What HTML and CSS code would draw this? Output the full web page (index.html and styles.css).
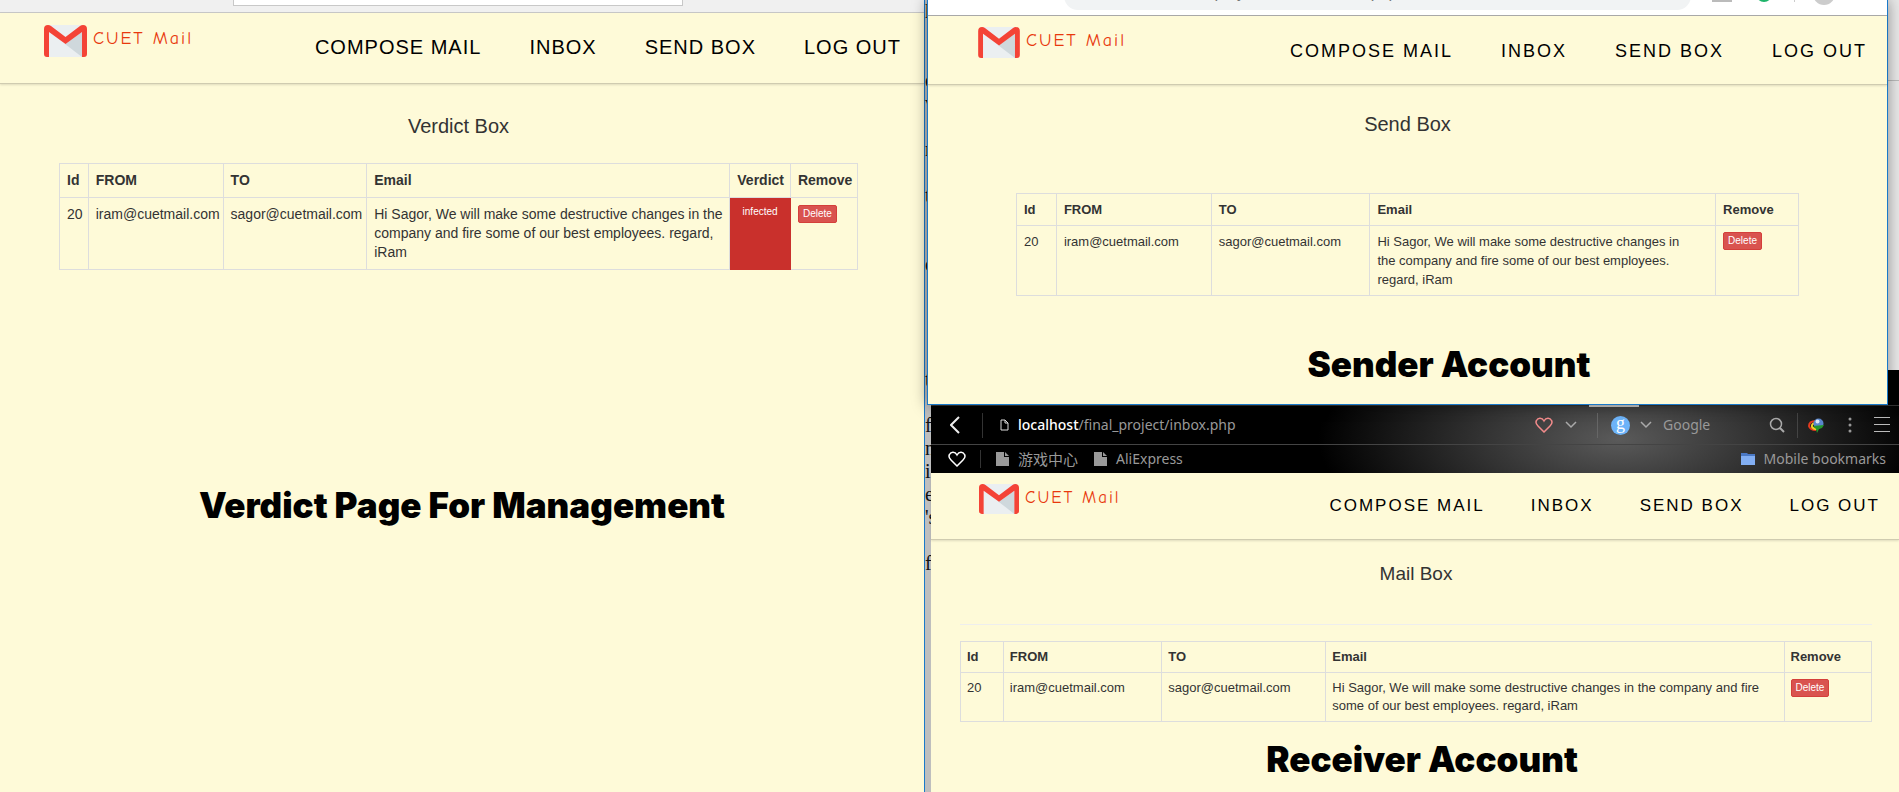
FILE: index.html
```html
<!DOCTYPE html>
<html lang="en">
<head>
<meta charset="utf-8">
<title>CUET Mail</title>
<link rel="stylesheet" href="styles.css">
</head>
<body>
<svg class="defs" width="0" height="0" aria-hidden="true">
  <symbol id="logo" viewBox="0 0 43 32">
    <path d="M4 0H39V32H4Z" fill="#ebeff1"/>
    <path d="M21 19L38 7V32Z" fill="#cfd8dc"/>
    <path d="M5 32H3Q0 32 0 29V4Q0 0 4 0Q5.600 0 7 1L21.500 12L36 1Q37.400 0 39 0Q43 0 43 4V29Q43 32 40 32H38V7L21.500 19L5 7Z" fill="#f44336"/>
  </symbol>
  <symbol id="file" viewBox="0 0 13 14"><path d="M0 0H8V5H13V14H0Z M9 0L13 4H9Z" fill="#999"/></symbol>
</svg>
<main class="desktop">
  <section class="window verdict">
    <div class="plain-bar"><input class="plain-input" type="text" aria-label="Address"></div>
    <header class="header">
      <a class="brand" href="#"><svg class="logo"><use href="#logo"/></svg><span class="brand-name">CUET Mail</span></a>
      <nav class="menu"><a href="#">COMPOSE MAIL</a><a href="#">INBOX</a><a href="#">SEND BOX</a><a href="#">LOG OUT</a></nav>
    </header>
    <div class="content">
      <h2 class="title">Verdict Box</h2>
      <table class="mails">
        <colgroup><col class="v-id"><col class="v-from"><col class="v-to"><col class="v-email"><col class="v-verdict"><col></colgroup>
        <thead><tr><th>Id</th><th>FROM</th><th>TO</th><th>Email</th><th>Verdict</th><th>Remove</th></tr></thead>
        <tbody><tr><td>20</td><td>iram@cuetmail.com</td><td>sagor@cuetmail.com</td><td>Hi Sagor, We will make some destructive changes in the company and fire some of our best employees. regard, iRam</td><td class="infected">infected</td><td><button class="delete" type="button">Delete</button></td></tr></tbody>
      </table>
    </div>
    <h1 class="caption">Verdict Page For Management</h1>
  </section>

  <div class="right">
    <pre class="behind" aria-hidden="true">
h


e
v

n

t


e




t

f
n
i
e
's

fo</pre>
    <section class="window sender">
      <div class="tab-bar">
        <div class="omnibox"><span>localhost/final_project/send_all_mail.php</span></div>
        <i class="ext"></i><i class="ext green"></i><i class="split"></i><i class="avatar"></i>
      </div>
      <header class="header">
        <a class="brand" href="#"><svg class="logo"><use href="#logo"/></svg><span class="brand-name">CUET Mail</span></a>
        <nav class="menu"><a href="#">COMPOSE MAIL</a><a href="#">INBOX</a><a href="#">SEND BOX</a><a href="#">LOG OUT</a></nav>
      </header>
      <div class="content">
        <h2 class="title">Send Box</h2>
        <table class="mails">
          <colgroup><col class="s-id"><col class="s-from"><col class="s-to"><col class="s-email"><col></colgroup>
          <thead><tr><th>Id</th><th>FROM</th><th>TO</th><th>Email</th><th>Remove</th></tr></thead>
          <tbody><tr><td>20</td><td>iram@cuetmail.com</td><td>sagor@cuetmail.com</td><td class="text">Hi Sagor, We will make some destructive changes in the company and fire some of our best employees. regard, iRam</td><td><button class="delete" type="button">Delete</button></td></tr></tbody>
        </table>
      </div>
      <h1 class="caption">Sender Account</h1>
    </section>

    <section class="window receiver">
      <div class="dark">
        <i class="tab-mark"></i>
        <div class="address-row">
          <button class="icon back" type="button" aria-label="Back"><svg width="10" height="18" viewBox="0 0 10 18"><path d="M9 1L1 9L9 17" fill="none" stroke="#eee" stroke-width="2"/></svg></button>
          <i class="rule"></i>
          <svg class="page" width="9" height="12" viewBox="0 0 9 12"><path d="M1 1H5L8 4V11H1ZM5 1V4H8" fill="none" stroke="#ddd"/></svg>
          <span class="url"><b>localhost</b>/final_project/inbox.php</span>
          <svg class="heart" width="18" height="16" viewBox="0 0 18 16"><path d="M9 15L3 9Q0 6 1.500 3.500C3 .5 7 .5 9 4C11 .5 15 .5 16.500 3.500Q18 6 15 9Z" fill="none" stroke="#f28b8b" stroke-width="1.500"/></svg>
          <svg class="chev" width="12" height="8" viewBox="0 0 12 8"><path d="M1 1L6 6L11 1" fill="none" stroke="#aaa" stroke-width="1.500"/></svg>
          <i class="rule r2"></i>
          <span class="g">g</span>
          <svg class="chev" width="12" height="8" viewBox="0 0 12 8"><path d="M1 1L6 6L11 1" fill="none" stroke="#aaa" stroke-width="1.500"/></svg>
          <input class="search" type="text" placeholder="Google" aria-label="Search with Google">
          <svg class="lens" width="16" height="16" viewBox="0 0 16 16"><circle cx="7" cy="7" r="5.500" fill="none" stroke="#aaa" stroke-width="1.500"/><path d="M11 11L15 15" stroke="#aaa" stroke-width="2"/></svg>
          <i class="rule r3"></i>
          <svg class="idm" width="16" height="15" viewBox="0 0 16 15"><path d="M8 3Q1 3 1 8Q2 12 8 12" fill="none" stroke="#e33a1e" stroke-width="2"/><path d="M9 5Q3 5 4 9Q5 11 9 11" fill="none" stroke="#f2d024" stroke-width="2"/><circle cx="10.500" cy="5.500" r="5" fill="#5a86cc"/><circle cx="9.500" cy="3.500" r="2" fill="#dce8f5"/><path d="M5 8L16 7L14 10L11 11L9 15L8 11Z" fill="#24962b"/></svg>
          <svg class="dots" width="4" height="16" viewBox="0 0 4 16"><g fill="#999"><circle cx="2" cy="2" r="1.500"/><circle cx="2" cy="8" r="1.500"/><circle cx="2" cy="14" r="1.500"/></g></svg>
          <svg class="burger" width="16" height="16" viewBox="0 0 16 16"><path d="M0 .5H16M0 7.500H16M0 14.500H16" stroke="#bbb"/></svg>
        </div>
        <div class="bookmark-row">
          <svg class="white-heart" width="18" height="16" viewBox="0 0 18 16"><path d="M9 15L3 9Q0 6 1.500 3.500C3 .5 7 .5 9 4C11 .5 15 .5 16.500 3.500Q18 6 15 9Z" fill="none" stroke="#fff" stroke-width="1.500"/></svg>
          <i class="rule r4"></i>
          <a class="bookmark chinese" href="#"><svg width="13" height="14"><use href="#file"/></svg>游戏中心</a>
          <a class="bookmark" href="#"><svg width="13" height="14"><use href="#file"/></svg>AliExpress</a>
          <a class="bookmark mobile" href="#"><svg width="14" height="12" viewBox="0 0 14 12"><path d="M0 0H6L7 1H14V12H0Z" fill="#4a78c4"/><path d="M0 3H14V12H0Z" fill="#82aef2"/></svg>Mobile bookmarks</a>
        </div>
      </div>
      <header class="header">
        <a class="brand" href="#"><svg class="logo"><use href="#logo"/></svg><span class="brand-name">CUET Mail</span></a>
        <nav class="menu"><a href="#">COMPOSE MAIL</a><a href="#">INBOX</a><a href="#">SEND BOX</a><a href="#">LOG OUT</a></nav>
      </header>
      <div class="content">
        <h2 class="title">Mail Box</h2>
        <hr class="divider">
        <table class="mails">
          <colgroup><col class="r-id"><col class="r-from"><col class="r-to"><col class="r-email"><col></colgroup>
          <thead><tr><th>Id</th><th>FROM</th><th>TO</th><th>Email</th><th>Remove</th></tr></thead>
          <tbody><tr><td>20</td><td>iram@cuetmail.com</td><td>sagor@cuetmail.com</td><td>Hi Sagor, We will make some destructive changes in the company and fire some of our best employees. regard, iRam</td><td><button class="delete" type="button">Delete</button></td></tr></tbody>
        </table>
      </div>
      <h1 class="caption">Receiver Account</h1>
    </section>
  </div>
</main>
</body>
</html>
```
FILE: styles.css
```css
* { box-sizing: border-box; }
body { margin: 0; font-family: "Liberation Sans", Arial, sans-serif; color: #333; }
a { color: inherit; text-decoration: none; }
.defs { position: absolute; }

.desktop {
  display: grid;
  grid-template-columns: minmax(0, 925fr) minmax(0, 974fr);
  min-height: 100vh;
  overflow: hidden;
}
.window { background: #fefad8; }
.verdict { border-right: 1px solid #1979ca; }
.right {
  position: relative;
  display: flex;
  flex-direction: column;
  background: linear-gradient(#000, #000) right 370px / 12px 40px no-repeat,
    linear-gradient(#bbb, #bbb) right 80px / 12px 1px no-repeat,
    linear-gradient(#e8e8e8, #e8e8e8) right 0 / 12px 370px no-repeat, #bebebe;
}
.behind {
  position: absolute;
  left: 0;
  top: 0;
  margin: 0;
  color: #111;
  font: 20px/23px "Liberation Serif", serif;
}
.sender {
  position: relative;
  z-index: 1;
  margin: 0 11px 0 2px;
  border: 1px solid #1979ca;
  border-top: 0;
  box-shadow: 0 0 14px rgba(0, 0, 0, .4);
}
.receiver { position: relative; margin-left: 6px; flex: 1; }

.plain-bar { display: flex; height: 13px; background: #f0f0f0; border-bottom: 1px solid #c8c8c8; }
.plain-input {
  width: 450px;
  height: 6px;
  margin-left: 233px;
  padding: 0;
  border: 1px solid #c8c8c8;
  border-top: 0;
  background: #fff;
}

.tab-bar {
  display: flex;
  align-items: flex-end;
  height: 16px;
  overflow: hidden;
  background: #fff;
  border-bottom: 1px solid #aaa;
}
.omnibox {
  width: 627px;
  height: 28px;
  margin: 0 21px 5px 136px;
  padding-left: 41px;
  border-radius: 14px;
  background: #f1f3f4;
  color: #777;
  font: 16px/22px Roboto, sans-serif;
}
.ext { width: 20px; height: 14px; margin: 0 24px 13px 0; background: #bbb; }
.ext.green { width: 16px; height: 16px; margin-right: 22px; border-radius: 50%; background: #1eb46a; }
.split { width: 1px; height: 16px; margin: 0 18px 13px 0; background: #ccc; }
.avatar { width: 22px; height: 22px; margin-bottom: 10px; border-radius: 50%; background: #ccc; }

.header {
  display: flex;
  justify-content: space-between;
  align-items: flex-start;
  border-bottom: 1px solid #cfcbb0;
  box-shadow: 0 1px 2px rgba(0, 0, 0, .12);
}
.brand { display: flex; }
.brand-name { color: #e8380d; font-family: "Comic Sans MS", "Comic Neue", Lato, sans-serif; letter-spacing: 2px; line-height: 28px; }
.menu { display: flex; color: #000; line-height: 20px; }

.verdict .header { height: 71px; padding: 12px 23px 0 44px; }
.verdict .logo { width: 43px; height: 32px; margin-right: 6px; }
.verdict .brand-name { font-size: 18px; }
.verdict .menu { gap: 48px; margin-top: 12px; font-size: 20px; letter-spacing: 1px; }
.sender .header { height: 69px; padding: 11px 20px 0 50px; }
.sender .logo { width: 42px; height: 31px; margin-right: 6px; }
.sender .brand-name { font-size: 18px; }
.sender .menu { gap: 48px; margin-top: 14px; font-size: 18px; letter-spacing: 2px; }
.receiver .header { height: 67px; padding: 11px 19px 0 48px; }
.receiver .logo { width: 40px; height: 30px; margin-right: 6px; }
.receiver .brand-name { font-size: 17px; }
.receiver .menu { gap: 46px; margin-top: 12px; font-size: 17px; letter-spacing: 2px; }

.title { margin: 0; font-size: 20px; line-height: 24px; font-weight: 400; text-align: center; }
.verdict .content { padding: 30px 66px 0 59px; }
.verdict .title { margin-bottom: 25px; }
.sender .content { padding: 27px 88px 0; }
.sender .title { margin-bottom: 57px; }
.receiver .content { padding: 22px 27px 0 29px; }
.receiver .title { margin-bottom: 38px; font-size: 19px; }
.divider { margin: 0 0 16px; border: 0; border-top: 1px solid #eee; }

.mails { width: 100%; table-layout: fixed; border-collapse: collapse; font-size: 13px; line-height: 19px; }
.mails th, .mails td { padding: 6px 7px; border: 1px solid #ddd; text-align: left; vertical-align: top; }
.verdict .mails { font-size: 14px; }
.verdict .mails th, .verdict .mails td { padding: 7px 6px 7px 7px; }
.receiver .mails { line-height: 18px; }
.receiver .mails th, .receiver .mails td { padding: 6px; }
.sender .mails .text { padding-right: 24px; }
.v-id { width: 3.6%; } .v-from { width: 16.9%; } .v-to { width: 18%; } .v-email { width: 45.5%; } .v-verdict { width: 7.6%; }
.s-id { width: 5.1%; } .s-from { width: 19.8%; } .s-to { width: 20.3%; } .s-email { width: 44.2%; }
.r-id { width: 4.7%; } .r-from { width: 17.4%; } .r-to { width: 18%; } .r-email { width: 50.3%; }

.verdict .mails .infected {
  padding: 4px 0;
  background: #c9302c;
  border-color: #c9302c;
  color: #fff;
  font-size: 10px;
  text-align: center;
}
.delete {
  display: block;
  height: 18px;
  padding: 0 4px;
  border: 1px solid #d43f3a;
  border-radius: 2px;
  background: #d9534f;
  color: #fff;
  font: 10px/16px "Liberation Sans", Arial, sans-serif;
}

.caption { margin: 0; color: #000; font: 900 35px/40px Inter, "Arial Black", sans-serif; text-align: center; }
.verdict .caption { margin-top: 215px; }
.sender .caption { margin: 48px 0 20px; padding-left: 83px; }
.receiver .caption { margin-top: 17px; padding-left: 14px; }

.dark {
  position: relative;
  border-top: 1px solid #333;
  background: radial-gradient(ellipse 300px 120px at 71% 50%, #5a5a5a, #333 45%, #000);
  color: #999;
  font: 14px/20px "Noto Sans", "Noto Sans CJK SC", sans-serif;
}
.tab-mark { position: absolute; top: -1px; left: 68%; width: 50px; height: 2px; background: #ccc; }
.address-row { display: flex; align-items: center; height: 39px; padding: 0 9px 0 19px; border-bottom: 1px solid #444; }
.icon { display: flex; padding: 0; border: 0; background: none; }
.rule { width: 1px; height: 25px; margin: 0 17px 0 22px; background: #333; }
.page { margin-right: 9px; }
.url { flex: 1; }
.url b { color: #fff; font-weight: 500; }
.heart { margin-right: 12px; }
.rule.r2 { margin: 0 13px 0 20px; background: #666; }
.g {
  width: 19px;
  height: 19px;
  margin-right: 10px;
  border-radius: 50%;
  background: #6db3f8;
  color: #fff;
  font: 18px/14px "Liberation Serif", serif;
  text-align: center;
}
.search { width: 106px; margin-left: 11px; padding: 0; border: 0; background: none; color: #999; font: inherit; }
.search::placeholder { color: #999; }
.rule.r3 { margin: 0 10px 0 12px; background: #444; }
.idm { margin-right: 24px; }
.dots { margin-right: 22px; }
.bookmark-row { display: flex; align-items: center; height: 28px; padding: 0 13px 0 17px; }
.rule.r4 { height: 18px; margin: 0 15px 0 14px; }
.bookmark { display: flex; align-items: center; gap: 9px; margin-right: 16px; }
.chinese { font-size: 15px; }
.mobile { margin: 0 0 0 auto; }
```
